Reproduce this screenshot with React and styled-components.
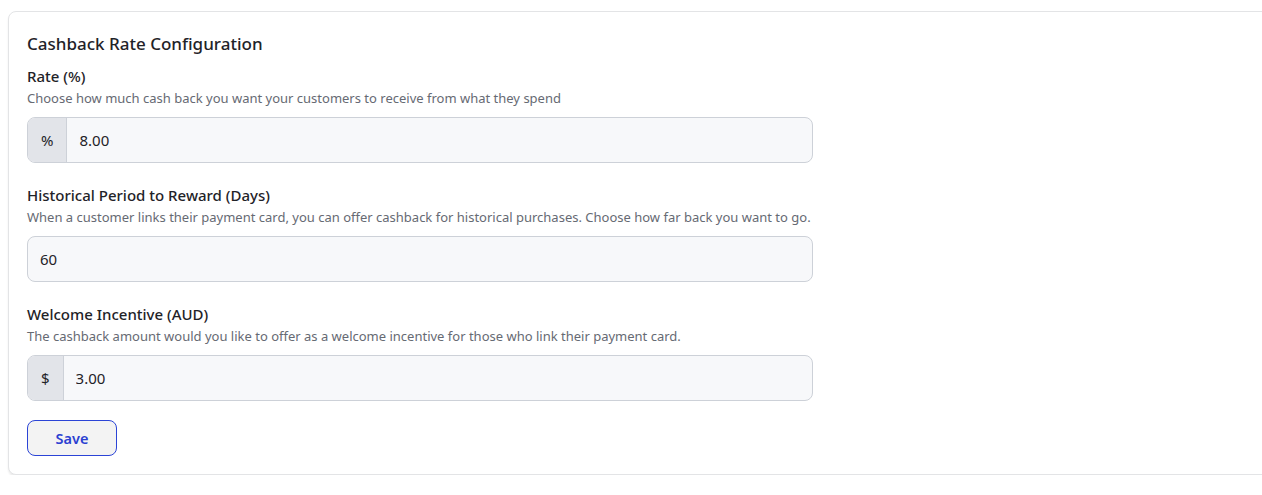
import { styled, createGlobalStyle } from "styled-components";
import { useState } from "react";

const GlobalStyle = createGlobalStyle`
  html, body {
    margin: 0;
    padding: 0;
    background: #fff;
    overflow: hidden;
  }
  body {
    font-family: "Noto Sans", "Open Sans", sans-serif;
    color: #1f2328;
  }
  * { box-sizing: border-box; }
`;

const fields = [
  {
    id: "rate",
    label: "Rate (%)",
    help: "Choose how much cash back you want your customers to receive from what they spend",
    prefix: "%",
    value: "8.00",
  },
  {
    id: "period",
    label: "Historical Period to Reward (Days)",
    help: "When a customer links their payment card, you can offer cashback for historical purchases. Choose how far back you want to go.",
    value: "60",
  },
  {
    id: "welcome",
    label: "Welcome Incentive (AUD)",
    help: "The cashback amount would you like to offer as a welcome incentive for those who link their payment card.",
    prefix: "$",
    value: "3.00",
  },
];

export default function App() {
  const [values, setValues] = useState(
    Object.fromEntries(fields.map((f) => [f.id, f.value])),
  );

  return (
    <>
      <GlobalStyle />
      <Page>
        <Card>
          <Title>Cashback Rate Configuration</Title>
          {fields.map((f) => (
            <Field key={f.id}>
              <Label htmlFor={f.id}>{f.label}</Label>
              <Help>{f.help}</Help>
              <InputGroup>
                {f.prefix && <Prefix>{f.prefix}</Prefix>}
                <Input
                  id={f.id}
                  value={values[f.id]}
                  onChange={(e) =>
                    setValues({ ...values, [f.id]: e.target.value })
                  }
                />
              </InputGroup>
            </Field>
          ))}
          <SaveButton>Save</SaveButton>
        </Card>
      </Page>
    </>
  );
}

const Page = styled.div`
  padding: 11px 0 0 8px;
  width: 1300px;
`;

const Card = styled.section`
  width: 1280px;
  background: #fff;
  border: 1px solid #e3e4e6;
  border-radius: 8px;
  box-shadow: 0 2px 2px rgba(0, 0, 0, 0.08);
  padding: 21px 18px 18px 18px;
  display: flex;
  flex-direction: column;
`;

const Title = styled.h2`
  margin: 0 0 11px;
  font-size: 17px;
  font-weight: 500;
  line-height: 22px;
  color: #1f2328;
`;

const Field = styled.div`
  display: flex;
  flex-direction: column;
  margin-bottom: 22px;
`;

const Label = styled.label`
  font-size: 15px;
  font-weight: 500;
  line-height: 20px;
  color: #1f2328;
`;

const Help = styled.p`
  margin: 3px 0 10px;
  font-size: 13px;
  line-height: 18px;
  color: #666a73;
`;

const InputGroup = styled.div`
  display: flex;
  width: 786px;
  height: 46px;
  border: 1px solid #cdd1d8;
  border-radius: 8px;
  overflow: hidden;
  background: #f7f8fa;
`;

const Prefix = styled.span`
  display: flex;
  align-items: center;
  justify-content: center;
  padding: 0 13px;
  background: #e2e4e9;
  border-right: 1px solid #cdd1d8;
  font-size: 15px;
  color: #1f2328;
`;

const Input = styled.input`
  flex: 1;
  border: none;
  outline: none;
  background: transparent;
  padding: 0 12px;
  font-family: inherit;
  font-size: 15px;
  color: #1f2328;
`;

const SaveButton = styled.button`
  width: 90px;
  height: 36px;
  margin-top: -3px;
  border: 1px solid #2b44d6;
  border-radius: 8px;
  background: #f3f3f3;
  color: #2b3fd1;
  font-family: inherit;
  font-size: 14.5px;
  font-weight: 600;
  cursor: pointer;
`;
